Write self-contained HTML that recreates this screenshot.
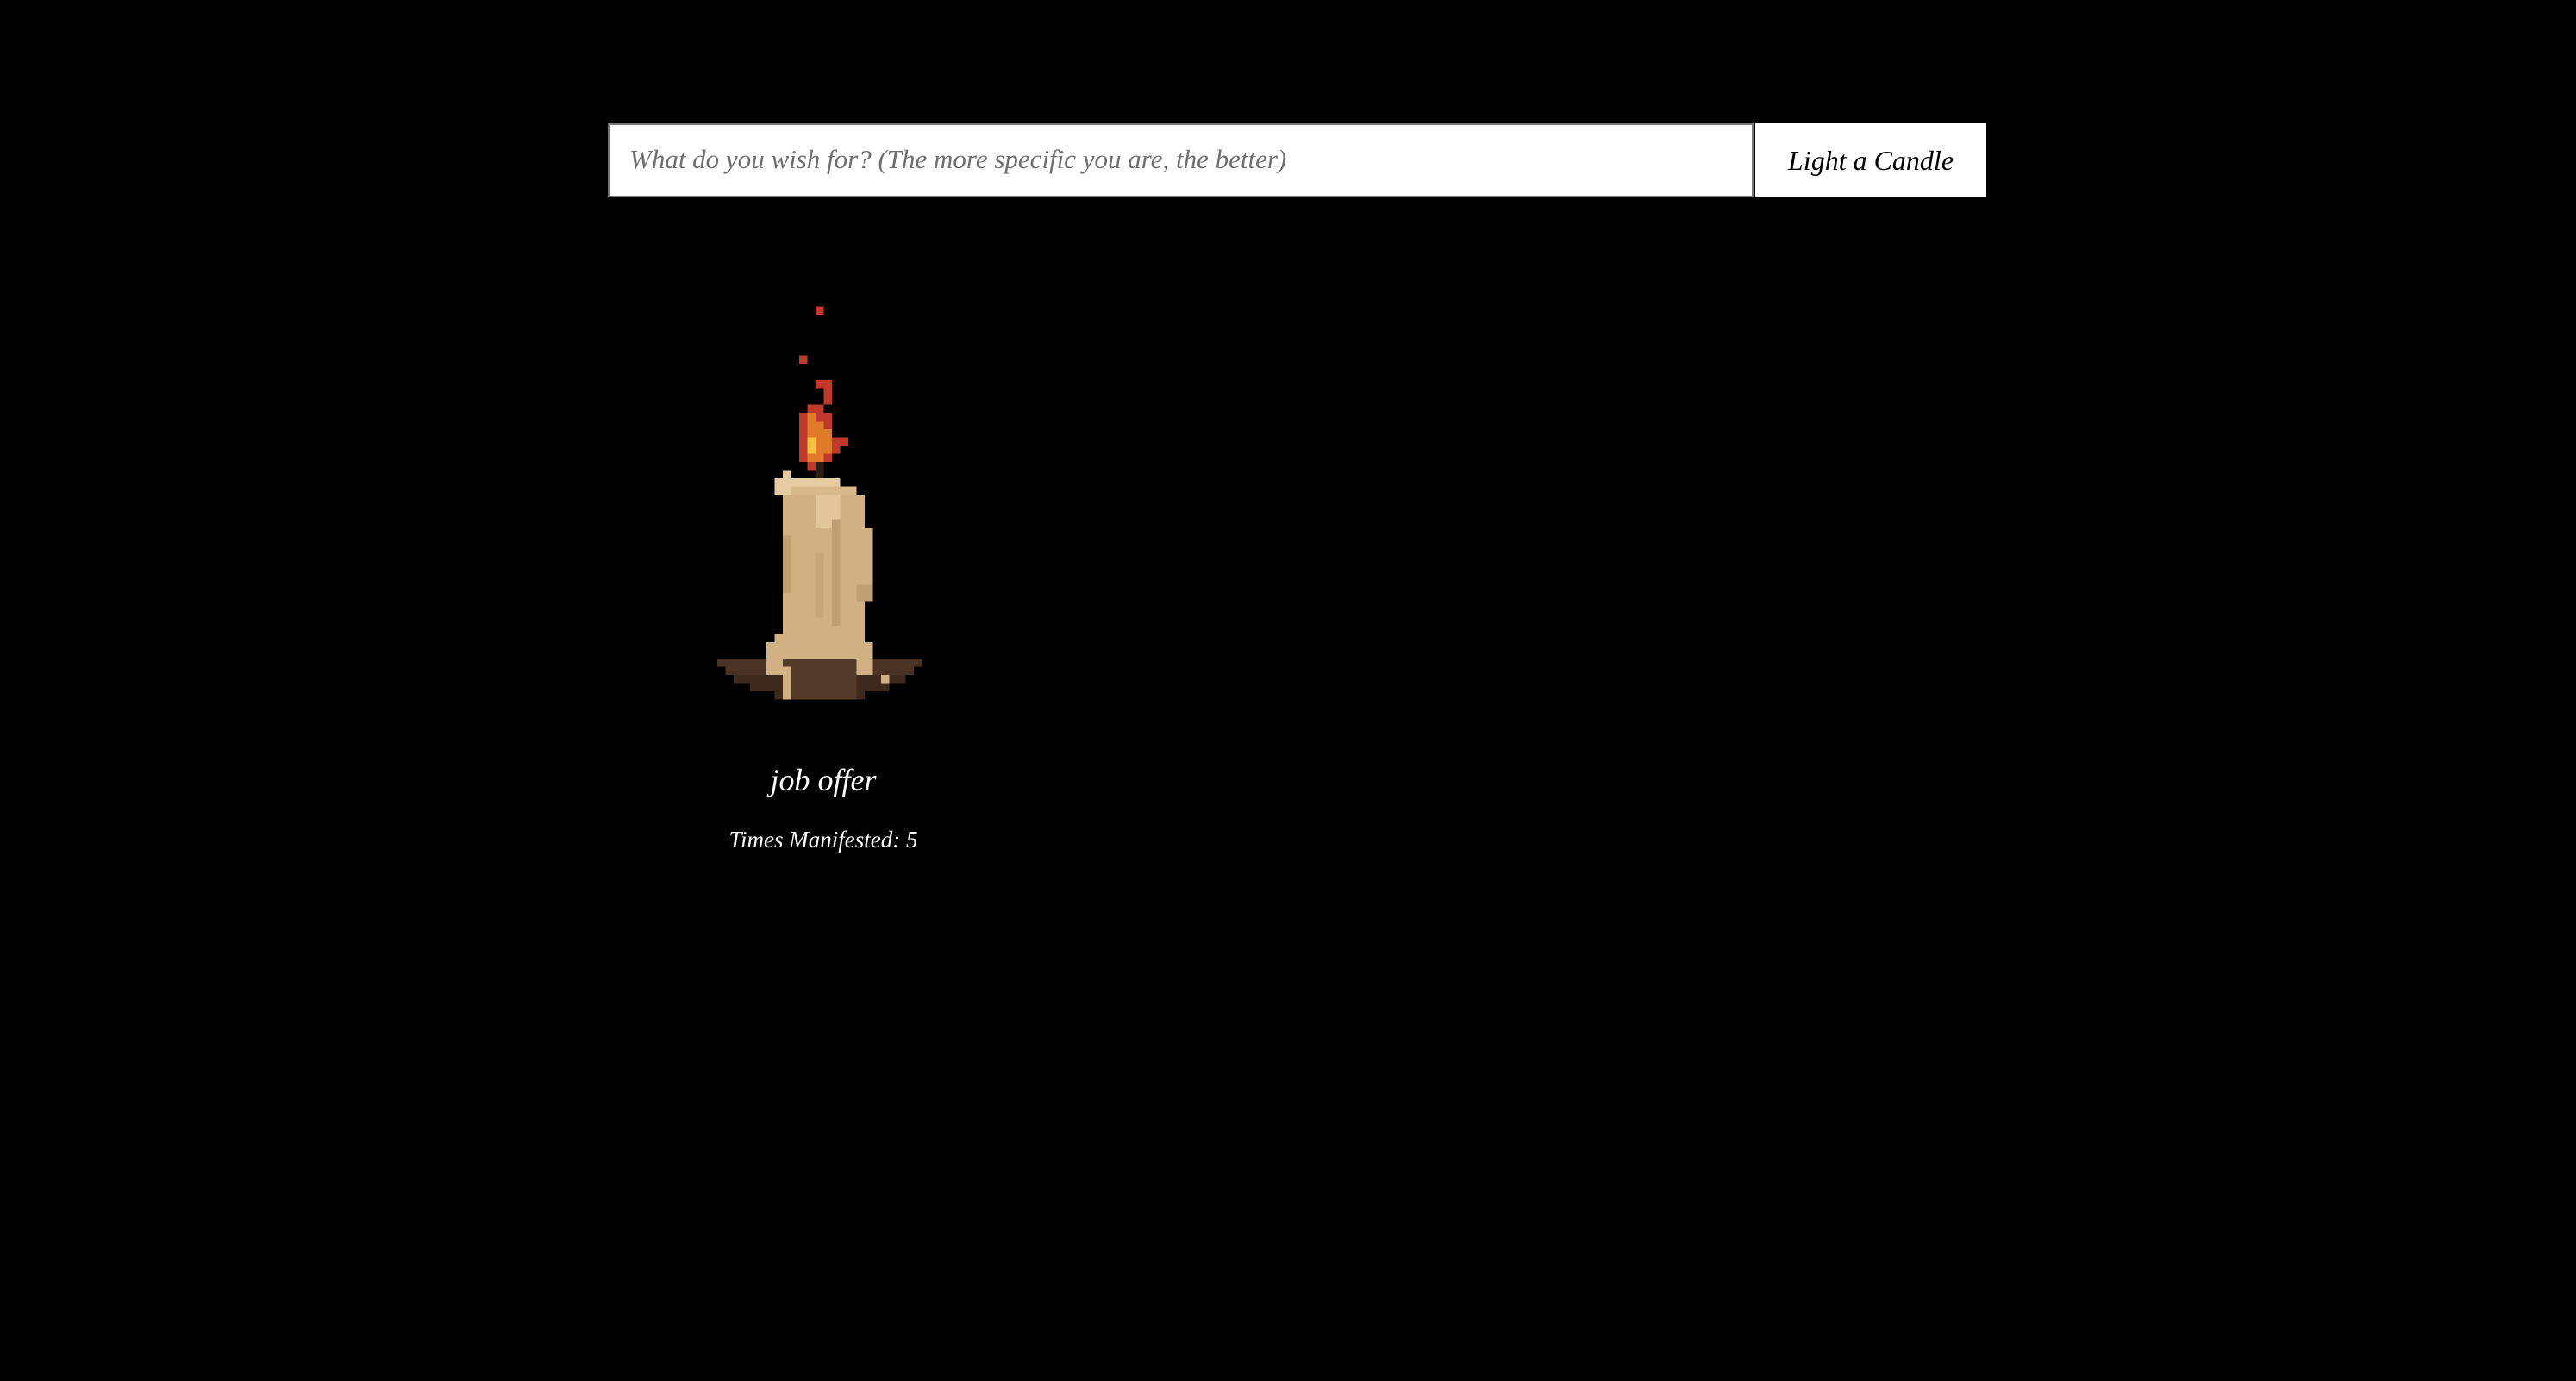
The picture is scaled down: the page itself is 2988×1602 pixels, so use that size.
<!DOCTYPE html>
<html><head><meta charset="utf-8"><style>
html,body{margin:0;padding:0;background:#000;width:2988px;height:1602px;overflow:hidden;font-family:"Liberation Serif",serif;}
.inp{position:absolute;left:705px;top:143px;width:1325px;height:82px;background:#fff;border:2px solid #777;}
.ph{position:absolute;left:23px;top:22px;font-size:31px;font-style:italic;color:#6e6e6e;white-space:nowrap;}
.btn{position:absolute;left:2036px;top:143px;width:268px;height:86px;background:#fff;}
.btn span{position:absolute;left:38px;top:25px;font-size:32px;font-style:italic;color:#000;white-space:nowrap;}
.t1{position:absolute;left:755px;width:400px;text-align:center;top:884px;font-size:36px;font-style:italic;color:#fff;}
.t2{position:absolute;left:755px;width:400px;text-align:center;top:959px;font-size:27px;font-style:italic;color:#fff;}
svg{position:absolute;left:822px;top:346px;}
</style></head><body>
<div class="inp"><div class="ph">What do you wish for? (The more specific you are, the better)</div></div>
<div class="btn"><span>Light a Candle</span></div>
<svg width="257" height="475" viewBox="0 0 27 50" shape-rendering="crispEdges">
<rect x="13" y="1" width="1" height="1" fill="#c0392b"/>
<rect x="11" y="7" width="1" height="1" fill="#c0392b"/>
<rect x="13" y="10" width="2" height="1" fill="#c0392b"/>
<rect x="14" y="11" width="1" height="2" fill="#c0392b"/>
<rect x="12" y="13" width="2" height="1" fill="#c0392b"/>
<rect x="11" y="14" width="4" height="6" fill="#c0392b"/>
<rect x="12" y="14" width="1" height="6" fill="#e07a2a"/>
<rect x="13" y="15" width="1" height="5" fill="#e07a2a"/>
<rect x="14" y="16" width="1" height="3" fill="#e07a2a"/>
<rect x="12" y="17" width="1" height="2" fill="#f0c53a"/>
<rect x="15" y="17" width="1" height="2" fill="#c0392b"/>
<rect x="16" y="17" width="1" height="1" fill="#c0392b"/>
<rect x="12" y="20" width="1" height="1" fill="#c0392b"/>
<rect x="13" y="20" width="1" height="2" fill="#2e1c14"/>
<rect x="9" y="21" width="1" height="1" fill="#e6cba2"/>
<rect x="8" y="22" width="8" height="2" fill="#e6cba2"/>
<rect x="10" y="23" width="8" height="1" fill="#d8b98c"/>
<rect x="9" y="24" width="10" height="18" fill="#d1b184"/>
<rect x="19" y="28" width="1" height="9" fill="#d1b184"/>
<rect x="13" y="24" width="3" height="4" fill="#e3c69c"/>
<rect x="9" y="29" width="1" height="7" fill="#bfa074"/>
<rect x="15" y="27" width="1" height="13" fill="#bfa074"/>
<rect x="18" y="35" width="2" height="2" fill="#bfa074"/>
<rect x="13" y="31" width="1" height="8" fill="#c6a77a"/>
<rect x="1" y="44" width="25" height="1" fill="#4a3324"/>
<rect x="2" y="45" width="23" height="1" fill="#4a3324"/>
<rect x="3" y="46" width="21" height="1" fill="#3e2a1d"/>
<rect x="5" y="47" width="17" height="1" fill="#3e2a1d"/>
<rect x="8" y="48" width="11" height="1" fill="#3e2a1d"/>
<rect x="8" y="41" width="11" height="1" fill="#d1b184"/>
<rect x="7" y="42" width="13" height="2" fill="#d1b184"/>
<rect x="7" y="44" width="2" height="2" fill="#d1b184"/>
<rect x="9" y="44" width="9" height="5" fill="#533a29"/>
<rect x="18" y="44" width="2" height="2" fill="#d1b184"/>
<rect x="9" y="45" width="1" height="4" fill="#d1b184"/>
<rect x="21" y="46" width="1" height="1" fill="#d1b184"/>
</svg>
<div class="t1">job offer</div>
<div class="t2">Times Manifested: 5</div>
</body></html>
